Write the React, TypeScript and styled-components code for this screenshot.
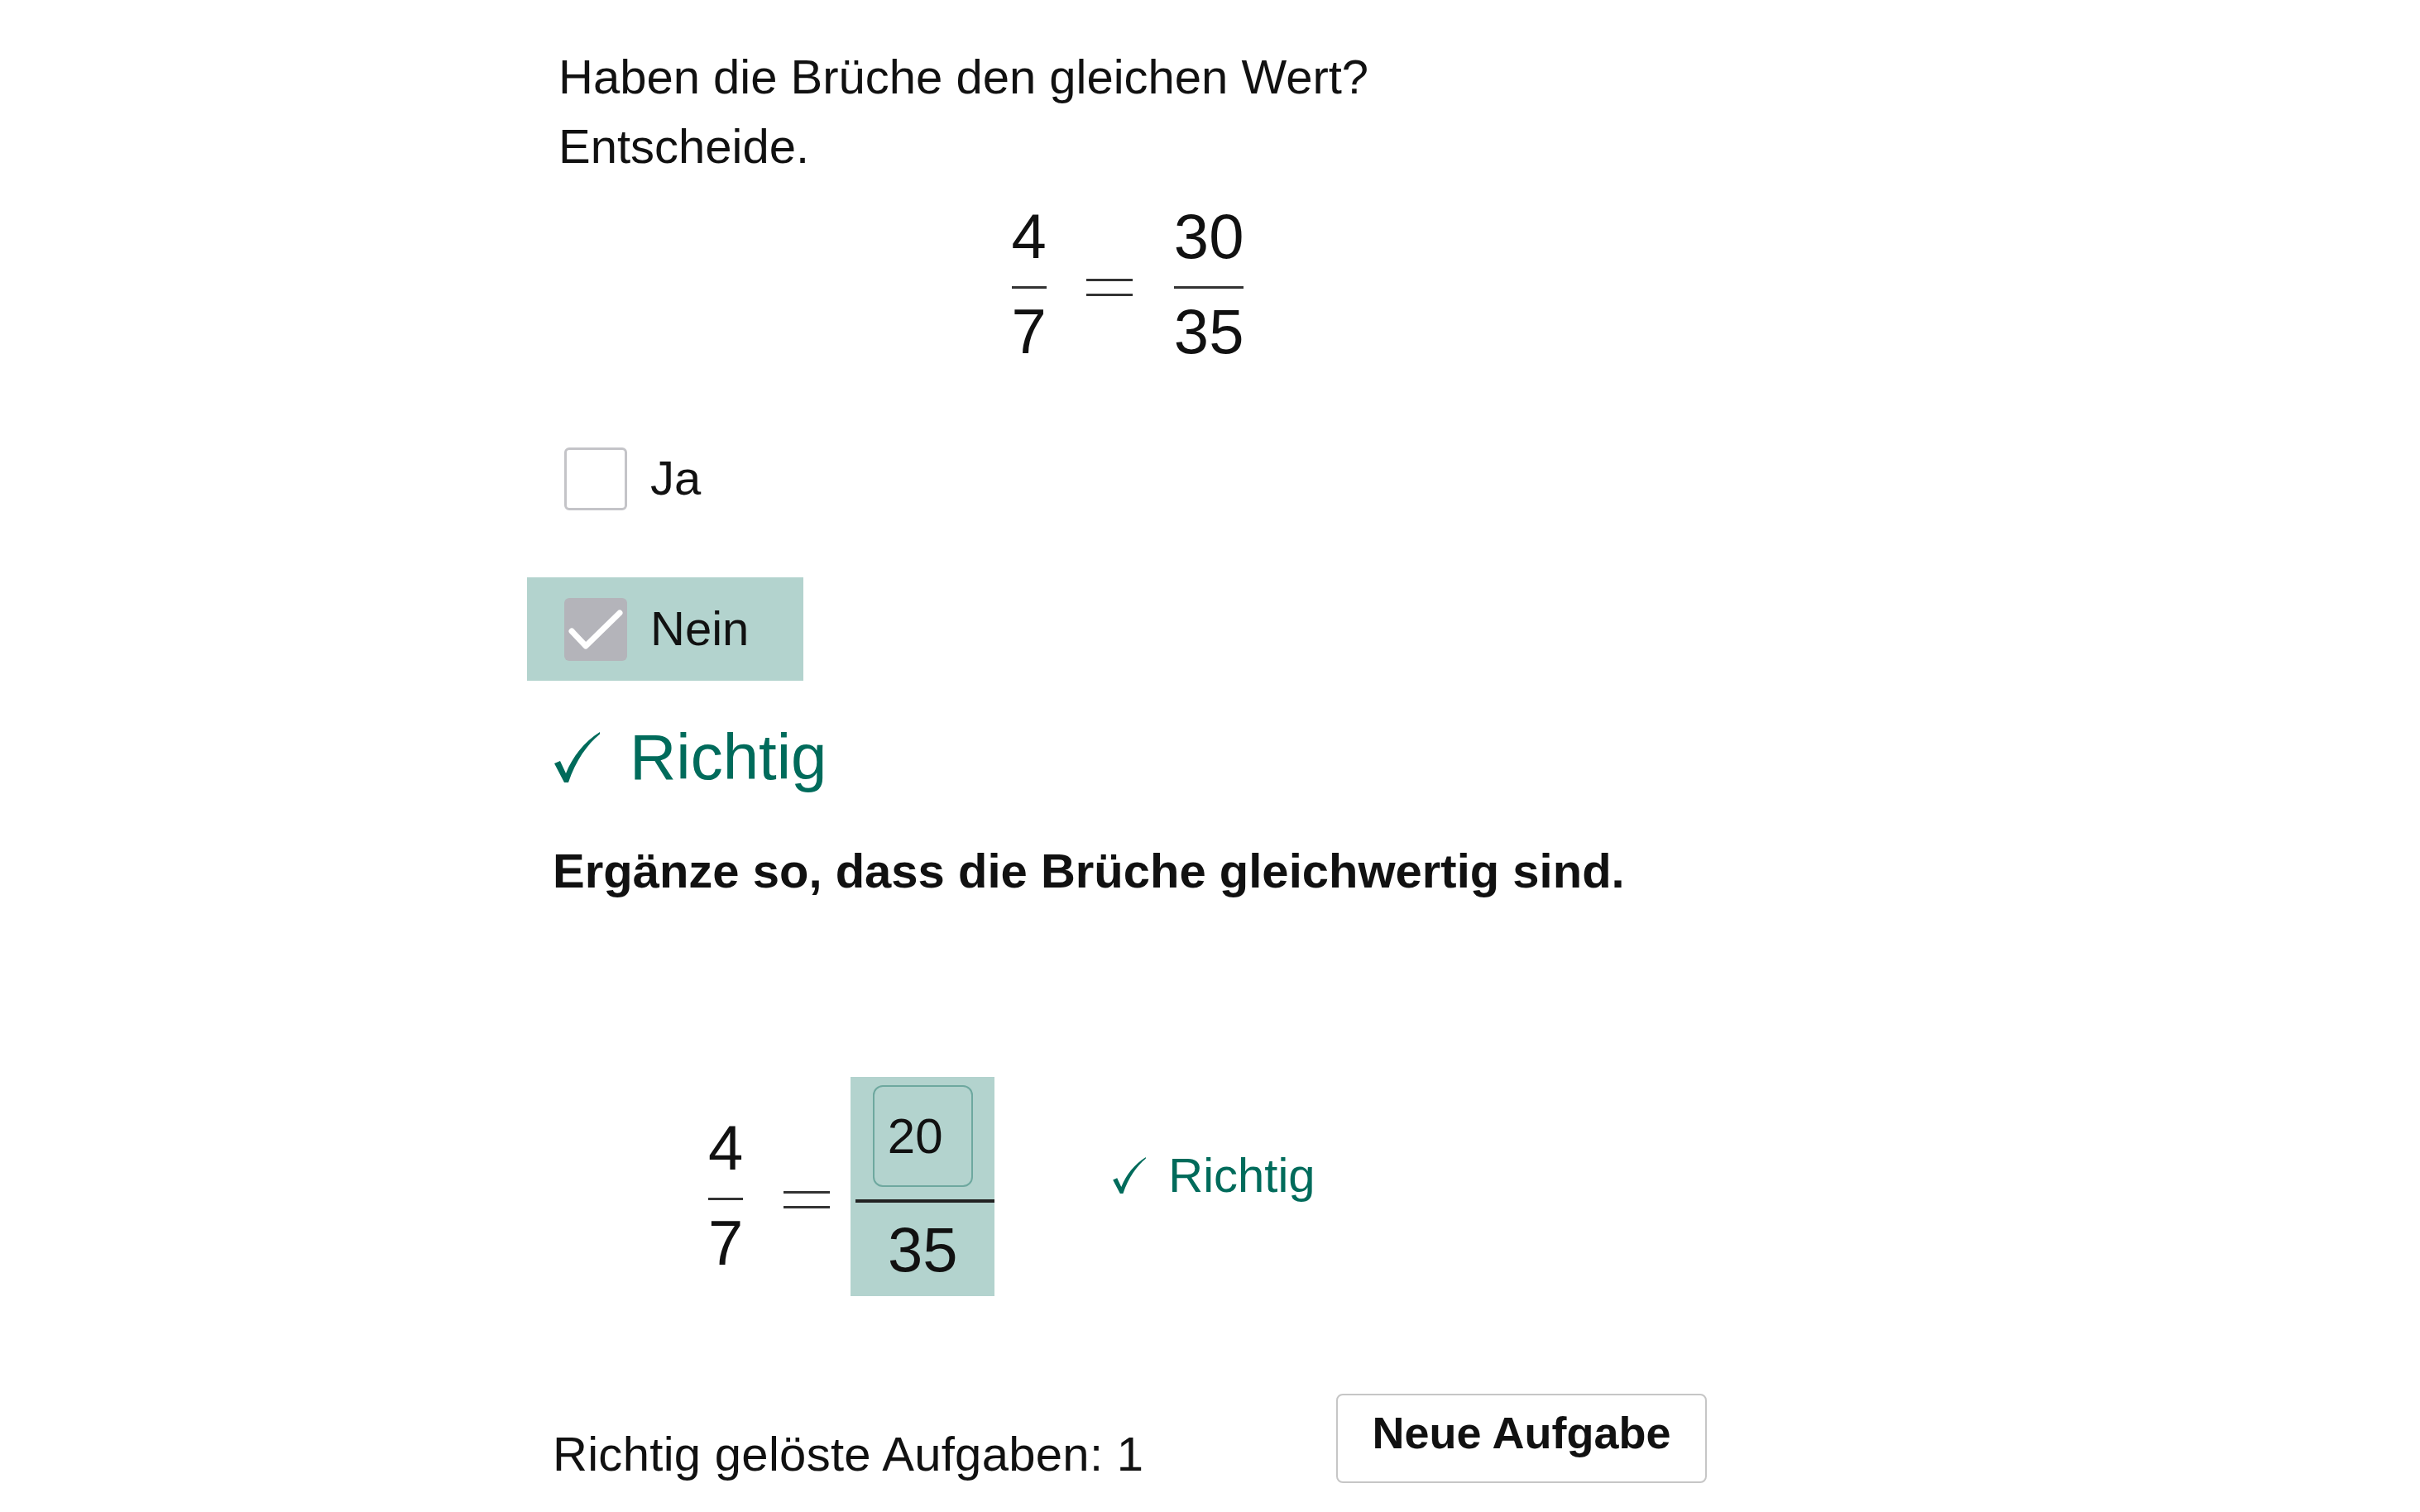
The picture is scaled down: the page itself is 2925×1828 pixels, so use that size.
import React from 'react';
import styled, { createGlobalStyle } from 'styled-components';

const TEAL_BG = '#b3d3ce';
const TEAL_TEXT = '#006b5b';

const GlobalStyle = createGlobalStyle`
	html, body {
		margin: 0;
		padding: 0;
		background: #fff;
	}
	body {
		font-family: "Liberation Sans", Arial, sans-serif;
		color: #111;
	}
`;

const CheckMark = ({ size }: { size: 'lg' | 'sm' }) => (
	<CheckSvg $size={size} viewBox="0 0 55 61">
		<path d="M0 38 L7 35 L14 50 C22 30 36 12 55 0 L55 2.5 C40 15 26 34 17 61 L12 61 Z" fill="currentColor" />
	</CheckSvg>
);

const Fraction = ({ num, den, offset = 0 }: { num: string; den: string; offset?: number }) => (
	<Frac $offset={offset}>
		<span>{num}</span>
		<FracBar />
		<span>{den}</span>
	</Frac>
);

const App = () => {
	return (
		<>
			<GlobalStyle />
			<Page>
				<Question>
					Haben die Brüche den gleichen Wert?
					<br />
					Entscheide.
				</Question>

				<ProblemEquation>
					<Fraction num="4" den="7" />
					<Equals $gap={48} $offset={88.5} />
					<FracSpacer>
						<Fraction num="30" den="35" />
					</FracSpacer>
				</ProblemEquation>

				<OptionList>
					<Option>
						<Box />
						Ja
					</Option>
					<Option $selected>
						<Box $checked>
							<svg width="76" height="76" viewBox="0 0 76 76">
								<polyline points="9,40 26,58 67,18" fill="none" stroke="#fff" strokeWidth="7" strokeLinecap="round" strokeLinejoin="round" />
							</svg>
						</Box>
						Nein
					</Option>
				</OptionList>

				<Feedback $size="lg">
					<CheckMark size="lg" />
					Richtig
				</Feedback>

				<Instruction>Ergänze so, dass die Brüche gleichwertig sind.</Instruction>

				<AnswerEquation>
					<Fraction num="4" den="7" offset={48} />
					<Equals $gap={49} $offset={137.5} />
					<AnswerCell>
						<AnswerInput readOnly value="20" />
						<AnswerBar />
						<AnswerDen>35</AnswerDen>
					</AnswerCell>
					<Feedback $size="sm">
						<CheckMark size="sm" />
						Richtig
					</Feedback>
				</AnswerEquation>

				<Footer>
					<Score>Richtig gelöste Aufgaben: 1</Score>
					<NewTaskButton>Neue Aufgabe</NewTaskButton>
				</Footer>
			</Page>
		</>
	);
};

const Page = styled.main`
	box-sizing: border-box;
	width: 1400px;
	margin-left: 663px;
	padding-top: 51px;
`;

const Question = styled.p`
	margin: 0;
	padding-left: 12px;
	font-size: 58px;
	line-height: 84px;
`;

const ProblemEquation = styled.div`
	display: flex;
	justify-content: center;
	align-items: flex-start;
	margin-top: 29px;
`;

const Frac = styled.span<{ $offset: number }>`
	display: inline-flex;
	flex-direction: column;
	align-items: center;
	margin-top: ${(p) => p.$offset}px;
	font-size: 76px;
	line-height: 76px;
`;

const FracBar = styled.span`
	align-self: stretch;
	height: 3px;
	margin: 22px 0 14px;
	background: #333;
`;

const FracSpacer = styled.span`
	margin-left: 50px;
`;

const Equals = styled.span<{ $gap: number; $offset: number }>`
	width: 56px;
	height: 15px;
	margin-left: ${(p) => p.$gap}px;
	margin-top: ${(p) => p.$offset}px;
	border-top: 3px solid #333;
	border-bottom: 3px solid #333;
`;

const OptionList = styled.div`
	display: flex;
	flex-direction: column;
	align-items: flex-start;
	gap: 57px;
	margin: 77px 0 0 -26px;
`;

const Option = styled.label<{ $selected?: boolean }>`
	box-sizing: border-box;
	display: flex;
	align-items: center;
	gap: 28px;
	height: 125px;
	padding: 0 66px 0 45px;
	background: ${(p) => (p.$selected ? TEAL_BG : 'transparent')};
	font-size: 58px;
	line-height: 1.15;
`;

const Box = styled.span<{ $checked?: boolean }>`
	box-sizing: border-box;
	display: flex;
	width: 76px;
	height: 76px;
	border-radius: 6px;
	border: ${(p) => (p.$checked ? 'none' : '3px solid #c4c4c8')};
	background: ${(p) => (p.$checked ? '#b4b4ba' : '#fff')};
`;

const Feedback = styled.div<{ $size: 'lg' | 'sm' }>`
	display: flex;
	align-items: flex-start;
	gap: ${(p) => (p.$size === 'lg' ? 36 : 27)}px;
	margin: ${(p) => (p.$size === 'lg' ? '48px 0 0 7px' : '86px 0 0 143px')};
	color: ${TEAL_TEXT};
	font-size: ${(p) => (p.$size === 'lg' ? 78 : 58)}px;
	line-height: 1.15;
`;

const CheckSvg = styled.svg<{ $size: 'lg' | 'sm' }>`
	flex: none;
	width: ${(p) => (p.$size === 'lg' ? 55 : 40)}px;
	height: ${(p) => (p.$size === 'lg' ? 61 : 44)}px;
	margin-top: ${(p) => (p.$size === 'lg' ? 14 : 10.5)}px;
`;

const Instruction = styled.p`
	margin: 59px 0 0;
	padding-left: 5px;
	font-weight: 700;
	font-size: 58px;
	line-height: 1.15;
`;

const AnswerEquation = styled.div`
	display: flex;
	align-items: flex-start;
	margin: 216px 0 0 193px;
`;

const AnswerCell = styled.div`
	box-sizing: border-box;
	display: flex;
	flex-direction: column;
	align-items: center;
	width: 174px;
	height: 265px;
	margin-left: 25px;
	padding-top: 10px;
	background: ${TEAL_BG};
`;

const AnswerInput = styled.input`
	box-sizing: border-box;
	width: 121px;
	height: 123px;
	padding: 0 0 0 16px;
	border: 2px solid #6ea89f;
	border-radius: 12px;
	background: transparent;
	font-family: "Liberation Sans", Arial, sans-serif;
	font-size: 60px;
	color: #111;
	outline: none;
`;

const AnswerBar = styled.span`
	align-self: stretch;
	height: 4px;
	margin: 15px 0 19px 6px;
	background: #222;
`;

const AnswerDen = styled.span`
	font-size: 76px;
	line-height: 76px;
`;

const Footer = styled.div`
	display: flex;
	justify-content: space-between;
	align-items: flex-end;
	margin-top: 118px;
`;

const Score = styled.span`
	margin-bottom: 2px;
	padding-left: 5px;
	font-size: 58px;
	line-height: 1.15;
	letter-spacing: 0.3px;
`;

const NewTaskButton = styled.button`
	box-sizing: border-box;
	width: 448px;
	height: 108px;
	padding: 14px 0 28px;
	border: 2px solid #c6c6c6;
	border-radius: 8px;
	background: #fff;
	color: #111;
	font-family: "Liberation Sans", Arial, sans-serif;
	font-weight: 700;
	font-size: 54px;
	line-height: 1.15;
	text-align: center;
`;

export default App;
